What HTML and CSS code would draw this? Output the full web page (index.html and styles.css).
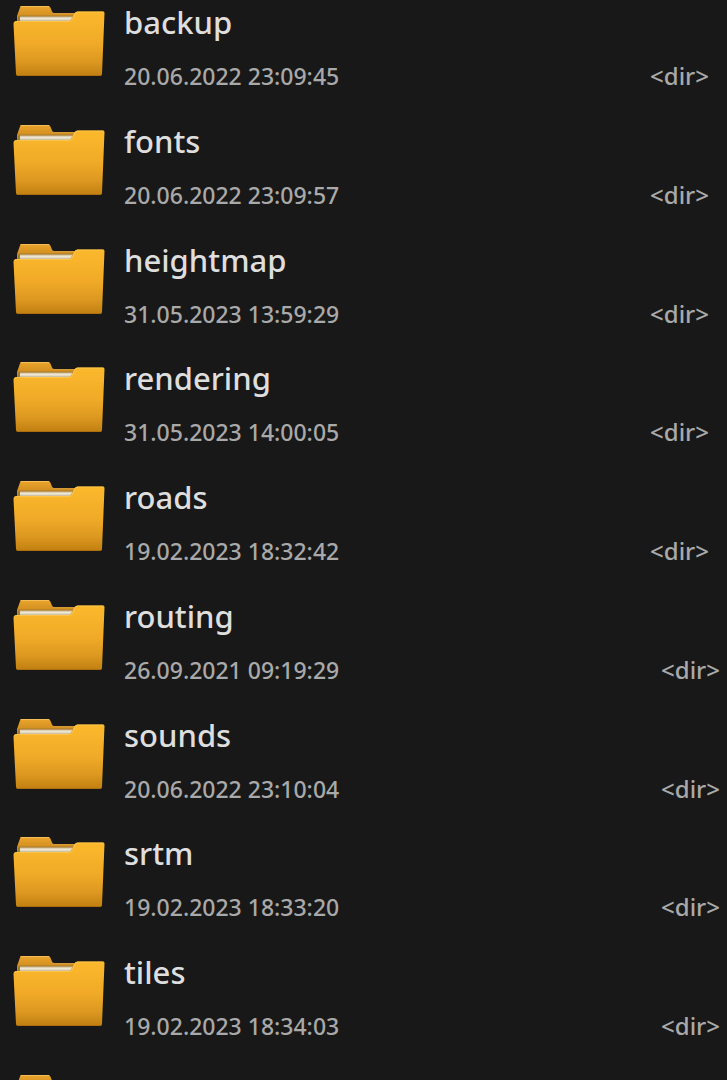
FILE: index.html
```html
<!DOCTYPE html>
<html lang="en">
<head>
    <meta charset="UTF-8">
    <meta name="viewport" content="width=device-width, initial-scale=1.0">
    <title>Files</title>
    <link rel="stylesheet" href="styles.css">
</head>
<body>
    <!-- folder icon, shared by all rows -->
    <svg class="defs" aria-hidden="true">
        <defs>
            <linearGradient id="front" x1="0" y1="0" x2="0" y2="1">
                <stop offset="0" stop-color="#fcb92c"/>
                <stop offset="0.5" stop-color="#f0aa28"/>
                <stop offset="0.78" stop-color="#dc9820"/>
                <stop offset="1" stop-color="#c07f10"/>
            </linearGradient>
            <linearGradient id="back" x1="0" y1="0" x2="0" y2="1">
                <stop offset="0" stop-color="#eba52c"/>
                <stop offset="0.45" stop-color="#d08e20"/>
                <stop offset="1" stop-color="#a87018"/>
            </linearGradient>
            <linearGradient id="paper" x1="0" y1="0" x2="0" y2="1">
                <stop offset="0" stop-color="#c9b893"/>
                <stop offset="0.5" stop-color="#f4ecd9"/>
                <stop offset="1" stop-color="#c2b597"/>
            </linearGradient>
        </defs>
        <symbol id="folder" viewBox="0 0 92 72">
            <path d="M4 24V11L7 2.500Q7.600 1 9 1H35Q37 1 37.600 3L39 6.500Q39.600 8 41.500 8H66V24Z" fill="url(#back)"/>
            <path d="M7.500 1.500H36" stroke="#f4bd58" stroke-width="1" fill="none"/>
            <path d="M40 8.500H64" stroke="#d59a38" stroke-width="1" fill="none"/>
            <path d="M5 17V12Q5 10.500 7 10.500H61V17Z" fill="#a87a2c"/>
            <path d="M7 16V11.500H60L57 16Z" fill="url(#paper)"/>
            <path d="M.5 19Q.5 16 3.500 16H55.500Q58 16 59 13.500L61 9Q62 6.500 64.500 6.500H90Q91.500 6.500 91.500 8L89 69Q89 71 87 71H5Q3 71 3 69Z" fill="url(#front)"/>
            <path d="M1.500 17.500Q2 16.500 3.500 16.500H56Q58.500 16.500 59.500 14L61.500 9.500Q62.500 7 64.500 7H90.500" fill="none" stroke="#ffcb55" stroke-width=".7"/>
            <path d="M4 70.500H88" stroke="#a86b0c" stroke-width=".8"/>
        </symbol>
    </svg>

    <ul class="list">
        <li class="row">
            <svg class="icon" aria-hidden="true"><use href="#folder"/></svg>
            <div class="info">
                <p class="name">backup</p>
                <p class="meta"><span class="date">20.06.2022 23:09:45</span><span>&lt;dir&gt;</span></p>
            </div>
        </li>
        <li class="row">
            <svg class="icon" aria-hidden="true"><use href="#folder"/></svg>
            <div class="info">
                <p class="name">fonts</p>
                <p class="meta"><span class="date">20.06.2022 23:09:57</span><span>&lt;dir&gt;</span></p>
            </div>
        </li>
        <li class="row">
            <svg class="icon" aria-hidden="true"><use href="#folder"/></svg>
            <div class="info">
                <p class="name">heightmap</p>
                <p class="meta"><span class="date">31.05.2023 13:59:29</span><span>&lt;dir&gt;</span></p>
            </div>
        </li>
        <li class="row">
            <svg class="icon" aria-hidden="true"><use href="#folder"/></svg>
            <div class="info">
                <p class="name">rendering</p>
                <p class="meta"><span class="date">31.05.2023 14:00:05</span><span>&lt;dir&gt;</span></p>
            </div>
        </li>
        <li class="row">
            <svg class="icon" aria-hidden="true"><use href="#folder"/></svg>
            <div class="info">
                <p class="name">roads</p>
                <p class="meta"><span class="date">19.02.2023 18:32:42</span><span>&lt;dir&gt;</span></p>
            </div>
        </li>
        <li class="row wide">
            <svg class="icon" aria-hidden="true"><use href="#folder"/></svg>
            <div class="info">
                <p class="name">routing</p>
                <p class="meta"><span class="date">26.09.2021 09:19:29</span><span>&lt;dir&gt;</span></p>
            </div>
        </li>
        <li class="row wide">
            <svg class="icon" aria-hidden="true"><use href="#folder"/></svg>
            <div class="info">
                <p class="name">sounds</p>
                <p class="meta"><span class="date">20.06.2022 23:10:04</span><span>&lt;dir&gt;</span></p>
            </div>
        </li>
        <li class="row wide">
            <svg class="icon" aria-hidden="true"><use href="#folder"/></svg>
            <div class="info">
                <p class="name">srtm</p>
                <p class="meta"><span class="date">19.02.2023 18:33:20</span><span>&lt;dir&gt;</span></p>
            </div>
        </li>
        <li class="row wide">
            <svg class="icon" aria-hidden="true"><use href="#folder"/></svg>
            <div class="info">
                <p class="name">tiles</p>
                <p class="meta"><span class="date">19.02.2023 18:34:03</span><span>&lt;dir&gt;</span></p>
            </div>
        </li>
        <li class="row wide">
            <svg class="icon" aria-hidden="true"><use href="#folder"/></svg>
            <div class="info">
                <p class="name">tracks</p>
            </div>
        </li>
    </ul>
</body>
</html>
```
FILE: styles.css
```css
* {
    margin: 0;
    padding: 0;
    box-sizing: border-box;
}

body {
    height: 100vh;
    overflow: hidden;
    background: #181818;
    font-family: "Noto Sans", "Open Sans", sans-serif;
    font-weight: 500;
}

li {
    list-style: none;
}

/* keeps the gradients usable, display: none would drop them */
.defs {
    position: absolute;
    width: 0;
    height: 0;
}

.row {
    display: flex;
    gap: 19px;
    padding: 0 18px 21px 13px;
}

.row:nth-child(4n+3) {
    padding-bottom: 20px;
}

.wide {
    padding-right: 7px;
}

.icon {
    flex: none;
    width: 92px;
    height: 72px;
    margin-top: 5px;
}

.info {
    flex: 1;
}

.name {
    color: #dedede;
    font-size: 31px;
    line-height: 44px;
    margin-bottom: 10px;
}

.meta {
    display: flex;
    justify-content: space-between;
    align-items: baseline;
    color: #a9a9a9;
    font-size: 24px;
    line-height: 44px;
}

.date {
    font-size: 23px;
}
```
